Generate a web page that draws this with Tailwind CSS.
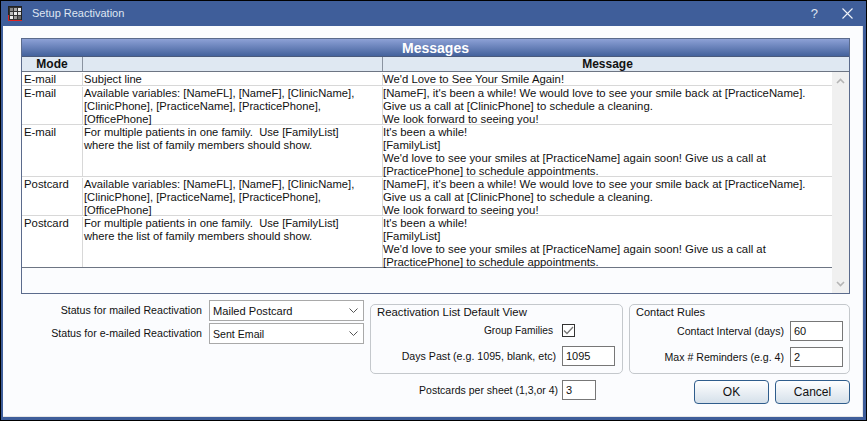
<!DOCTYPE html>
<html lang="en">
  <head>
    <meta charset="UTF-8" />
    <title>Setup Reactivation</title>
    <script src="https://cdn.jsdelivr.net/npm/@tailwindcss/browser@4"></script>
  </head>
  <body class="w-[867px] h-[421px] overflow-hidden bg-black font-['Liberation_Sans',sans-serif] text-[11.35px] leading-[13px] text-[#111]">
    <div class="m-px h-[419px] w-[865px] flex flex-col bg-[#3f5e9a] pl-[2px] pr-[3px] pb-[3px]">
      <!-- title bar -->
      <div class="h-[25px] shrink-0 flex items-center text-[#dfe6f2] -mx-px">
        <svg class="ml-[6px] mr-[10px]" width="14" height="15" viewBox="0 0 14 15">
          <rect x="0.5" y="0.5" width="13" height="14" fill="#333" stroke="#222" />
          <path d="M0 14.5H14M0.5 9V15" stroke="#d22" />
          <rect x="2" y="2" width="3" height="3" fill="#888" />
          <rect x="6" y="2" width="3" height="3" fill="#aaa" />
          <rect x="10" y="2" width="3" height="3" fill="#eee" />
          <rect x="2" y="6" width="3" height="3" fill="#bbb" />
          <rect x="6" y="6" width="3" height="3" fill="#eee" />
          <rect x="10" y="6" width="3" height="3" fill="#ddd" />
          <rect x="2" y="10" width="3" height="3" fill="#eee" />
          <rect x="6" y="10" width="3" height="3" fill="#999" />
          <rect x="10" y="10" width="3" height="3" fill="#666" />
        </svg>
        <span class="text-[11px]">Setup Reactivation</span>
        <span class="ml-auto mr-[24px] text-[13px]">?</span>
        <svg class="mr-[11px]" width="11" height="11" viewBox="0 0 11 11">
          <path d="M0.5 0.5L10.5 10.5M10.5 0.5L0.5 10.5" stroke="#f0f3f9" stroke-width="1.1" />
        </svg>
      </div>

      <div class="flex-1 bg-[#fbfcfe] border-b border-r border-[#e6e6e6] pt-[12px] pl-[18px] flex flex-col">
        <!-- grid -->
        <div class="h-[256px] w-[829px] shrink-0 border border-[#5b6b8c] flex flex-col">
          <div class="h-[18px] shrink-0 border-b border-[#4a5a7c] bg-gradient-to-b from-[#8da1d6] to-[#44629c] text-center text-white font-bold text-[14px] leading-[18px]">Messages</div>
          <div class="h-[15px] shrink-0 flex border-b border-[#6d7583] bg-[#dfe8f2] font-bold text-[12px] leading-[14px]">
            <div class="w-[61px] text-center border-r border-[#8a93a0]">Mode</div>
            <div class="w-[300px] text-center border-r border-[#8a93a0]"></div>
            <div class="flex-1 text-center pr-[17px]">Message</div>
          </div>
          <div class="flex-1 flex min-h-0">
            <div class="flex-1 flex flex-col bg-[#fbfcfe]">
              <div class="h-[196px] bg-white border-b border-[#6d7583]">
                <div class="flex h-[14px] pt-[1px] border-b border-[#d8d8d8]">
                  <div class="w-[61px] pl-[2px] border-r border-[#d8d8d8]">E-mail</div>
                  <div class="w-[300px] pl-[1px] border-r border-[#d8d8d8] text-[11.2px]">Subject line</div>
                  <div class="flex-1">We'd Love to See Your Smile Again!</div>
                </div>
                <div class="flex h-[39px] pt-[1px] border-b border-[#d8d8d8]">
                  <div class="w-[61px] pl-[2px] border-r border-[#d8d8d8]">E-mail</div>
                  <div class="w-[300px] pl-[1px] border-r border-[#d8d8d8] text-[11.2px]">Available variables: [NameFL], [NameF], [ClinicName],<br />[ClinicPhone], [PracticeName], [PracticePhone],<br />[OfficePhone]</div>
                  <div class="flex-1">[NameF], it's been a while! We would love to see your smile back at [PracticeName].<br />Give us a call at [ClinicPhone] to schedule a cleaning.<br />We look forward to seeing you!</div>
                </div>
                <div class="flex h-[52px] pt-[1px] border-b border-[#d8d8d8]">
                  <div class="w-[61px] pl-[2px] border-r border-[#d8d8d8]">E-mail</div>
                  <div class="w-[300px] pl-[1px] border-r border-[#d8d8d8] text-[11.2px]">For multiple patients in one family.&nbsp; Use [FamilyList]<br />where the list of family members should show.</div>
                  <div class="flex-1">It's been a while!<br />[FamilyList]<br />We'd love to see your smiles at [PracticeName] again soon! Give us a call at<br />[PracticePhone] to schedule appointments.</div>
                </div>
                <div class="flex h-[39px] pt-[1px] border-b border-[#d8d8d8]">
                  <div class="w-[61px] pl-[2px] border-r border-[#d8d8d8]">Postcard</div>
                  <div class="w-[300px] pl-[1px] border-r border-[#d8d8d8] text-[11.2px]">Available variables: [NameFL], [NameF], [ClinicName],<br />[ClinicPhone], [PracticeName], [PracticePhone],<br />[OfficePhone]</div>
                  <div class="flex-1">[NameF], it's been a while! We would love to see your smile back at [PracticeName].<br />Give us a call at [ClinicPhone] to schedule a cleaning.<br />We look forward to seeing you!</div>
                </div>
                <div class="flex h-[51px] pt-[1px]">
                  <div class="w-[61px] pl-[2px] border-r border-[#d8d8d8]">Postcard</div>
                  <div class="w-[300px] pl-[1px] border-r border-[#d8d8d8] text-[11.2px]">For multiple patients in one family.&nbsp; Use [FamilyList]<br />where the list of family members should show.</div>
                  <div class="flex-1">It's been a while!<br />[FamilyList]<br />We'd love to see your smiles at [PracticeName] again soon! Give us a call at<br />[PracticePhone] to schedule appointments.</div>
                </div>
              </div>
            </div>
            <!-- scrollbar -->
            <div class="w-[17px] shrink-0 bg-[#f0f0f0] flex flex-col items-center justify-between py-[6px]">
              <svg width="9" height="6" viewBox="0 0 9 6"><path d="M1 5L4.5 1.5L8 5" fill="none" stroke="#b5b5b5" stroke-width="1.6" /></svg>
              <svg width="9" height="6" viewBox="0 0 9 6"><path d="M1 1L4.5 4.5L8 1" fill="none" stroke="#b5b5b5" stroke-width="1.6" /></svg>
            </div>
          </div>
        </div>

        <!-- lower controls -->
        <div class="flex flex-1">
          <div class="w-[349px] shrink-0 pt-[6px] pr-[6px] flex flex-col gap-[2px]">
            <div class="flex items-center justify-end gap-[7px]">
              <span class="text-[10.65px]">Status for mailed Reactivation</span>
              <div class="w-[155px] h-[21px] border border-[#a9a9a9] bg-white flex items-center justify-between pl-[3px] pr-[5px]">
                <span class="text-[11.1px] pt-[2px]">Mailed Postcard</span>
                <svg width="9" height="5" viewBox="0 0 9 5"><path d="M0.5 0.5L4.5 4.5L8.5 0.5" fill="none" stroke="#555" /></svg>
              </div>
            </div>
            <div class="flex items-center justify-end gap-[7px]">
              <span class="text-[10.65px]">Status for e-mailed Reactivation</span>
              <div class="w-[155px] h-[21px] border border-[#a9a9a9] bg-white flex items-center justify-between pl-[3px] pr-[5px]">
                <span class="text-[10.6px] pt-[2px]">Sent Email</span>
                <svg width="9" height="5" viewBox="0 0 9 5"><path d="M0.5 0.5L4.5 4.5L8.5 0.5" fill="none" stroke="#555" /></svg>
              </div>
            </div>
          </div>

          <div class="flex-1 pt-[10px]">
            <div class="flex gap-[6px]">
              <div class="w-[253px] h-[70px] rounded-[5px] border border-[#c4c8cc] px-[6px] pt-[1px]">
                <div>Reactivation List Default View</div>
                <div class="flex items-center justify-end gap-[9px] mt-[5px] pr-[41px]">
                  <span class="text-[10.2px]">Group Families</span>
                  <span class="w-[13px] h-[13px] border border-[#333] bg-white flex items-center justify-center">
                    <svg width="11" height="9" viewBox="0 0 11 9"><path d="M1 4.5L4 7.5L10 1" fill="none" stroke="#777" stroke-width="1.3" /></svg>
                  </span>
                </div>
                <div class="flex items-center justify-end gap-[6px] mt-[9px] pr-[1px]">
                  <span class="text-[10.65px]">Days Past (e.g. 1095, blank, etc)</span>
                  <div class="w-[53px] h-[20px] border border-[#777] bg-white pl-[3px] leading-[18px] text-[11px]">1095</div>
                </div>
              </div>
              <div class="w-[221px] h-[70px] rounded-[5px] border border-[#c4c8cc] px-[6px] pt-[1px]">
                <div class="text-[11px]">Contact Rules</div>
                <div class="flex items-center justify-end gap-[6px] mt-[2px]">
                  <span class="text-[10.65px]">Contact Interval (days)</span>
                  <div class="w-[53px] h-[20px] border border-[#777] bg-white pl-[3px] leading-[18px] text-[11px]">60</div>
                </div>
                <div class="flex items-center justify-end gap-[6px] mt-[6px]">
                  <span class="text-[10.6px]">Max # Reminders (e.g. 4)</span>
                  <div class="w-[53px] h-[20px] border border-[#777] bg-white pl-[3px] leading-[18px] text-[11px]">2</div>
                </div>
              </div>
            </div>
            <div class="flex items-start mt-[6px]">
              <div class="w-[226px] flex items-center justify-end gap-[4px]">
                <span class="text-[10.5px]">Postcards per sheet (1,3,or 4)</span>
                <div class="w-[34px] h-[20px] border border-[#777] bg-white pl-[3px] leading-[18px] text-[11px]">3</div>
              </div>
              <button class="ml-[98px] w-[75px] h-[24px] rounded-[4px] border border-[#2f5d8c] bg-gradient-to-b from-[#ffffff] to-[#d5e0ea] text-[12px]">OK</button>
              <button class="ml-[6px] w-[75px] h-[24px] rounded-[4px] border border-[#2f5d8c] bg-gradient-to-b from-[#ffffff] to-[#d5e0ea] text-[12px]">Cancel</button>
            </div>
          </div>
        </div>
      </div>
    </div>
  </body>
</html>
